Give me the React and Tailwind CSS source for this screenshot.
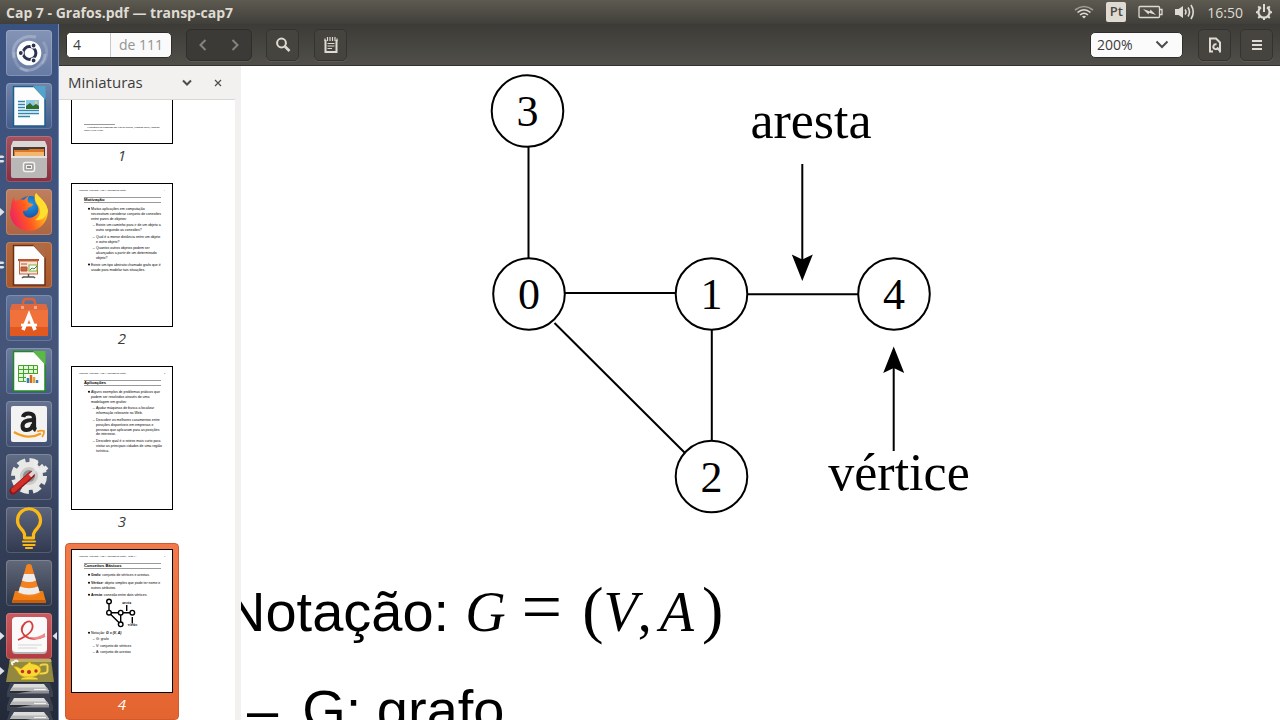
import React from "react";

const ui = "font-['Open_Sans','Noto_Sans',sans-serif]";

/* ---------- launcher icons, drawn on a 46 unit tile ---------- */

const Dash = () => (
  <svg viewBox="0 0 46 46" className="size-full">
    <g fill="none" stroke="#fff" strokeOpacity=".24" strokeWidth="3">
      <path d="M8 28C4 14 16 4 30 7" />
      <path d="M14 38C26 44 38 36 39 24" />
      <path d="M37 12C42 18 42 28 36 34" strokeOpacity=".16" />
      <path d="M8 22C8 34 14 40 22 41" strokeOpacity=".16" />
    </g>
    <circle cx="23" cy="23" r="12.300" fill="#fff" />
    <circle cx="23.500" cy="23" r="6.400" fill="none" stroke="#2b3350" strokeWidth="3" />
    <g stroke="#fff" strokeWidth="1.200" fill="#2b3350">
      <circle cx="14.800" cy="23" r="2.500" />
      <circle cx="27.600" cy="15.500" r="2.500" />
      <circle cx="27.600" cy="30.500" r="2.500" />
    </g>
  </svg>
);

const Sheet = ({ edge, fold, children }) => (
  <svg viewBox="0 0 46 46" className="size-full">
    <path d="M7.500 3.500H28L39 15V43H7.500Z" fill="#fdfdfd" stroke={edge} strokeWidth="1.500" />
    <path d="M27 3H39.500V17Z" fill={fold} />
    <path d="M27 3H39.500V17Z" fill="#fff" fillOpacity=".12" />
    {children}
  </svg>
);

const Writer = () => (
  <Sheet edge="#1b5f8c" fold="#3c97c4">
    <path d="M12 18.500h7M12 21.500h7M12 24.500h7M12 27.500h21M12 30.500h21M12 33.500h12" stroke="#2e86b5" strokeWidth="1.400" />
    <rect x="20" y="17" width="13" height="9" fill="#8cc6ea" />
    <path d="M20 26V23l4-3 3 3 3-2 3 2v3Z" fill="#2f6b2a" />
    <circle cx="30" cy="19.500" r="1.300" fill="#f5d64a" />
  </Sheet>
);

const Impress = () => (
  <Sheet edge="#6b2f16" fold="#a3552c">
    <rect x="12" y="17" width="21" height="2" fill="#b4552d" />
    <rect x="13.500" y="19" width="18" height="13" fill="#fbe3d8" stroke="#c2653c" />
    <path d="M15 22h6M15 25h6v4h-6z" stroke="#b4552d" fill="#c2653c" />
    <rect x="23" y="23" width="8" height="6" fill="#fff" stroke="#7cb342" />
    <path d="M24 28l2-2 2 1 3-3" stroke="#388e3c" fill="none" />
    <path d="M22.500 32v3M17 35h11M17 35l-1 1M28 35l1 1" stroke="#555" strokeWidth="1.500" />
  </Sheet>
);

const Calc = () => (
  <Sheet edge="#1f8a1f" fold="#43b02a">
    <rect x="12.500" y="17.500" width="19" height="16" fill="#e4f5dc" />
    <path d="M12.500 17.500h19v16h-19zM12.500 21.500h19M12.500 25.500h19M12.500 29.500h19M17.500 17.500v16M22.500 17.500v16M27.500 17.500v16" stroke="#43a32a" fill="none" />
    <rect x="20" y="26" width="14" height="9" fill="#f7f7f7" />
    <path d="M22 35v-5M31 35v-3" stroke="#2b7fc4" strokeWidth="2.500" />
    <path d="M25 35v-8" stroke="#d2691e" strokeWidth="2.500" />
    <path d="M28 35v-6" stroke="#e8a13a" strokeWidth="2.500" />
  </Sheet>
);

const Files = () => (
  <svg viewBox="0 0 46 46" className="size-full">
    <path d="M7 5H39L41 10V20H5V10Z" fill="#d9d8d5" />
    <rect x="7" y="11" width="32" height="10" fill="#4b3a34" />
    <path d="M8 14h14l2-1h14v8H8Z" fill="#d9772b" />
    <path d="M9 16h29v4H9Z" fill="#f4b66c" />
    <path d="M5 20H41V40Q41 42 39 42H7Q5 42 5 40Z" fill="#b9b8b6" />
    <path d="M5 20H41V22H5Z" fill="#e3e2e0" />
    <rect x="17.500" y="26.500" width="11" height="9" rx="2" fill="#a3a2a0" stroke="#f2f2f2" strokeWidth="1.500" />
    <rect x="20.500" y="29.500" width="5" height="3" fill="#8a8987" stroke="#f2f2f2" />
  </svg>
);

const Firefox = () => (
  <svg viewBox="0 0 46 46" className="size-full">
    <defs>
      <linearGradient id="ffBody" x1="0" y1="0.600" x2="1" y2="0.200">
        <stop offset="0" stopColor="#f0245e" />
        <stop offset=".4" stopColor="#ff5a1f" />
        <stop offset=".8" stopColor="#ffb61e" />
        <stop offset="1" stopColor="#fff04a" />
      </linearGradient>
      <radialGradient id="ffGlobe" cx=".5" cy=".3" r=".7">
        <stop offset="0" stopColor="#1aa0ea" />
        <stop offset="1" stopColor="#1b2f8c" />
      </radialGradient>
    </defs>
    <circle cx="24" cy="21" r="14" fill="url(#ffGlobe)" />
    <path d="M5 18C5 13 7 10 8 8C8 11 9 12 10 12C12 11 15 10 18 11C21 8 22 7 23 7C21 10 21 12 23 14L27 15C27 17 24 18 22 19C22 22 19 22 17 22C17 27 22 30 27 28C32 26 34 21 31 16C28 12 28 7 30 4C32 7 35 9 38 13C42 18 43 25 40 31C36 39 29 42 22 42C12 41 5 34 4 25Z" fill="url(#ffBody)" />
    <path d="M30 4C28 9 29 12 32 16C36 22 34 28 29 31C36 32 40 28 42 22C41 14 35 10 30 4Z" fill="#ffdf2e" />
  </svg>
);

const Software = () => (
  <svg viewBox="0 0 46 46" className="size-full">
    <path d="M17 13V8Q17 4 21 4h4Q29 4 29 8v5" fill="none" stroke="#d9623c" strokeWidth="2.500" />
    <path d="M6 9H40L42 15V41H4V15Z" fill="#f0713a" />
    <path d="M6 9H40L42 15H4Z" fill="#e0683f" />
    <path d="M4 32H42V41H4Z" fill="#e2581f" />
    <path d="M15 11h3v3h-3zM28 11h3v3h-3z" fill="#f6a98a" />
    <path d="M17 35L23 20L29 35" fill="none" stroke="#fff" strokeWidth="3.600" />
    <path d="M15 30H31" stroke="#fff" strokeWidth="2.600" />
  </svg>
);

const Amazon = () => (
  <svg viewBox="0 0 46 46" className="size-full">
    <rect x="5" y="5" width="36" height="36" rx="2" fill="#f3f3f3" />
    <g fill="none" stroke="#1f1f1f">
      <path d="M17 16Q18 12.500 22.500 12.500Q28 12.500 28 17V25Q28 28 30 29" strokeWidth="4.200" />
      <path d="M27 19Q16.500 19 16.500 25Q16.500 29 20.500 29Q26 29 27 23" strokeWidth="4" />
    </g>
    <path d="M8 31Q22 39.500 35 32.500" stroke="#f59a1b" strokeWidth="2.200" fill="none" />
    <path d="M31 30.500Q35 29 38 30Q38.500 33 36 36" stroke="#f59a1b" strokeWidth="1.800" fill="none" />
  </svg>
);

const Settings = () => (
  <svg viewBox="0 0 46 46" className="size-full">
    <circle cx="23" cy="22" r="15" fill="none" stroke="#e8e8e6" strokeWidth="6" strokeDasharray="7.850 3.930" />
    <circle cx="23" cy="22" r="11.500" fill="#c9c9c7" stroke="#e8e8e6" strokeWidth="5" />
    <circle cx="23" cy="22" r="6" fill="#8b8f97" />
    <path d="M7 37L25 21" stroke="#8e1512" strokeWidth="7" strokeLinecap="round" />
    <path d="M7.500 36L25 20.500" stroke="#d3302c" strokeWidth="5" strokeLinecap="round" />
    <path d="M24 22L33 13" stroke="#d8d8d8" strokeWidth="3.500" />
    <path d="M31 7Q28 11 31 15Q36 18 41 13" fill="none" stroke="#ececec" strokeWidth="4" />
  </svg>
);

const Bulb = () => (
  <svg viewBox="0 0 46 46" className="size-full">
    <path d="M18.500 31V27Q17.500 24 14.500 21A11.500 11.500 0 1 1 31.500 21Q28.500 24 27.500 27V31Z" fill="none" stroke="#fbb917" strokeWidth="3.200" strokeLinejoin="round" />
    <path d="M17 34.500H29M17.500 38H28.500M20 41H26" stroke="#fbb917" strokeWidth="2.200" strokeLinecap="round" />
  </svg>
);

const Cone = () => (
  <svg viewBox="0 0 46 46" className="size-full">
    <path d="M9 31H37L40 42H6Z" fill="#ef7d16" />
    <path d="M6 40H40V43H6Z" fill="#c95f0b" />
    <path d="M20.500 5Q23 3 25.500 5L34 34Q23 40 12 34Z" fill="#f58220" />
    <path d="M18 14H28L30 20.500Q23 23.500 16 20.500Z" fill="#ededed" />
    <path d="M14 26.500Q23 30 32 26.500L33.700 32.500Q23 37 12.300 32.500Z" fill="#ededed" />
  </svg>
);

const Reader = () => (
  <svg viewBox="0 0 46 46" className="size-full">
    <rect x="6" y="5" width="35" height="36" rx="4" fill="#b9b4b4" />
    <rect x="6" y="4" width="35" height="35" rx="4" fill="#fafafa" />
    <path d="M12 27Q28 20 26.500 12Q25 6 19 10Q13 16 18 22Q26 29 39 23" fill="none" stroke="#d93a3a" strokeWidth="1.800" />
    <path d="M20 23Q29 27 39 20V24Q28 29 20 23Z" fill="#ef8a8a" />
    <path d="M12 32H36M12 35H31" stroke="#d4d4d4" strokeWidth="1.200" />
  </svg>
);

const Teapot = () => (
  <svg viewBox="0 0 48 24" className="h-6 w-12">
    <path d="M4 0H45L48 23H0Z" fill="#93883f" />
    <path d="M4 0H45L45.500 3H3.500Z" fill="#b9ae62" />
    <path d="M34 7Q35 5 38 5.500H40Q42 5.500 41.500 9V12Q41 14.500 36 14.500H33" fill="none" stroke="#f0d648" strokeWidth="2" />
    <path d="M7 7L12 8Q15 11 17 8Q20 5 22 4.500L23.500 2L25 4.500Q31 5 34 8Q36 11 34 14Q31 17.500 27 18H18Q13 17 11 12Z" fill="#f7d934" stroke="#b38f0c" strokeWidth=".6" />
    <path d="M16 19Q23 17 31 19L32 20.500H15Z" fill="#f7d934" />
    <circle cx="16.500" cy="12.500" r="1.700" fill="#c9252d" />
    <circle cx="23" cy="13" r="2" fill="#c9252d" />
    <circle cx="30" cy="12" r="1.700" fill="#c9252d" />
    <path d="M7 6Q4 3 8 3Q10 0 12 3" stroke="#f4f4f4" strokeWidth="2" fill="none" />
  </svg>
);

const Drive = () => (
  <svg viewBox="0 0 48 14" className="h-[14px] w-12 shrink-0">
    <path d="M4 0H44L47 9V14H1V9Z" fill="#3b414e" />
    <path d="M8 1H38L43 8H4Z" fill="#dcdcda" />
    <path d="M6 4.500H41L43 8H4Z" fill="#b4b5b5" />
    <path d="M4 8H43V10.500H4Z" fill="#8b8d90" />
    <path d="M4 8H26L10 10.500H4Z" fill="#2a2d33" />
    <path d="M28 6.500H40" stroke="#f0f0f0" strokeWidth="1.200" />
  </svg>
);

const apps = [
  { name: "Dash", icon: Dash, tile: "from-[#8494b5] to-[#667aa3]" },
  { name: "LibreOffice Writer", icon: Writer, tile: "from-[#7286ac] to-[#435c8b]" },
  { name: "Arquivos", icon: Files, tile: "from-[#a3525f] to-[#853042]", mark: "two" },
  { name: "Firefox", icon: Firefox, tile: "from-[#bf7f5e] to-[#ad6543]", mark: "one" },
  { name: "LibreOffice Impress", icon: Impress, tile: "from-[#b46a3d] to-[#a9572a]", mark: "two" },
  { name: "Programas", icon: Software, tile: "from-[#63759a] to-[#465a83]" },
  { name: "LibreOffice Calc", icon: Calc, tile: "from-[#6c7c9e] to-[#465a83]" },
  { name: "Amazon", icon: Amazon, tile: "from-[#66738f] to-[#414f71]" },
  { name: "Configurações", icon: Settings, tile: "from-[#626d86] to-[#3d4762]" },
  { name: "Dicas", icon: Bulb, tile: "from-[#5d667c] to-[#30394f]" },
  { name: "VLC", icon: Cone, tile: "from-[#626979] to-[#2f374a]" },
  { name: "Visualizador de documentos", icon: Reader, tile: "from-[#c95b60] to-[#b23c41]", mark: "one", active: true },
];

const Mark = ({ kind }) => (
  <svg viewBox="0 0 6 12" className="h-3 w-[6px] shrink-0" fill="#dfe1e6">
    {kind === "one" && <path d="M0 2L4.500 6L0 10Z" />}
    {kind === "two" && <path d="M0 2.500H3L4.500 4L3 5H0ZM0 7H3L4.500 8L3 9.500H0Z" />}
    {kind === "here" && <path d="M5 2L.5 6L5 10Z" />}
  </svg>
);

const Launcher = () => (
  <nav aria-label="Lançador" className="flex w-[59px] shrink-0 flex-col overflow-hidden border-r border-[#6f8fc6] bg-linear-to-b from-[#3a5280] via-[#455578] to-[#222938] pt-[6px]">
    <ul className="flex shrink-0 flex-col gap-[7px]">
      {apps.map(({ name, icon: Icon, tile, mark, active }) => (
        <li key={name} className="flex items-center">
          <Mark kind={mark} />
          <button aria-label={name} className={"size-[46px] shrink-0 rounded-[4px] bg-linear-to-b shadow-[inset_0_0_0_1px_rgba(255,255,255,0.18)] " + tile}>
            <Icon />
          </button>
          <Mark kind={active ? "here" : ""} />
        </li>
      ))}
    </ul>
    <div className="flex shrink-0 items-center">
      <Mark kind="one" />
      <button aria-label="Chaleira" className="shrink-0"><Teapot /></button>
    </div>
    <div className="flex flex-col pl-[6px]">
      <Drive />
      <Drive />
      <Drive />
    </div>
  </nav>
);

/* ---------- top panel and toolbar ---------- */

const TopBar = () => (
  <header className={ui + " flex h-6 shrink-0 items-center justify-between bg-linear-to-b from-[#5d5a50] to-[#403f3a] pl-[6px] pr-[7px] text-[#dfdbd2]"}>
    <h1 className="text-[14px] font-bold">Cap 7 - Grafos.pdf — transp-cap7</h1>
    <div className="flex items-center">
      <svg viewBox="0 0 20 14" className="mr-3 h-[14px] w-5" fill="none" stroke="#dfdbd2" strokeWidth="1.600">
        <path d="M1 5Q10-2 19 5" strokeOpacity=".55" />
        <path d="M3.500 7.500Q10 2 16.500 7.500" />
        <path d="M6 10Q10 6.500 14 10" />
        <path d="M8 11.500L10 13.500L12 11.500Q10 10 8 11.500Z" fill="#dfdbd2" stroke="none" />
      </svg>
      <span className="mr-3 flex h-5 w-5 items-center justify-center rounded-[2px] bg-[#dfdbd2] text-[13px] font-semibold text-[#4a4843]">Pt</span>
      <svg viewBox="0 0 25 14" className="mr-3 h-[14px] w-[25px]" fill="none" stroke="#dfdbd2">
        <rect x="1" y="1.500" width="20.500" height="11" rx="1" strokeWidth="1.300" />
        <path d="M22 4.500H24V9.500H22" strokeWidth="1.300" />
        <path d="M5 4L12 6.500L12.500 4.500L18 10L11 7.800L10.500 9.500Z" fill="#dfdbd2" stroke="none" />
      </svg>
      <svg viewBox="0 0 20 16" className="mr-3 h-4 w-5" fill="none" stroke="#dfdbd2" strokeWidth="1.600">
        <path d="M0 5H3.500L8 2V14L3.500 11H0Z" fill="#dfdbd2" stroke="none" />
        <path d="M10 5.500Q12 8 10 10.500M13 3.500Q16 8 13 12.500M16 1Q20.500 8 16 15" />
      </svg>
      <time className="mr-3 text-[14px]">16:50</time>
      <svg viewBox="0 0 18 18" className="h-[18px] w-[18px]" fill="none" stroke="#dfdbd2">
        <path d="M6 4.300A5.600 5.600 0 1 0 12 4.300" strokeWidth="2.200" />
        <path d="M9 1V9" strokeWidth="2" />
        <path d="M1 9.200H3.500M14.500 9.200H17M3.200 3.400L5 5.200M14.800 3.400L13 5.200M3.200 15L5 13.200M14.800 15L13 13.200M9 14.500V17" strokeWidth="2" />
      </svg>
    </div>
  </header>
);

const toolButton = "flex h-8 w-[33px] items-center justify-center rounded-[5px] border border-[#34332f] bg-[#45443e] text-[#dfdbd2] shadow-[0_1px_0_#5d5b53]";

const Toolbar = () => (
  <div role="toolbar" className={ui + " flex h-[42px] shrink-0 items-center border-b border-[#34332f] bg-linear-to-b from-[#3c3b37] to-[#514f48] px-[7px] text-[14px]"}>
    <div className="mr-[14px] flex h-[26px] w-[106px] items-center overflow-hidden rounded-[5px] border border-[#2f2e2b] bg-[#fafafa]">
      <input aria-label="Página" defaultValue="4" className="h-full w-11 border-r border-[#c8c8c8] bg-white pl-[6px] text-[#3c3c3c] outline-none" />
      <span className="flex-1 text-center text-[#949494]">de 111</span>
    </div>
    <div className="mr-[14px] flex h-8 w-[66px] rounded-[5px] border border-[#2f2e2b] bg-[#3b3a36] shadow-[0_1px_0_#5d5b53]">
      <button aria-label="Página anterior" className="flex flex-1 items-center justify-center">
        <svg viewBox="0 0 10 12" className="h-3 w-[10px]" fill="none" stroke="#85837b" strokeWidth="2"><path d="M7.500 1L2.500 6L7.500 11" /></svg>
      </button>
      <button aria-label="Próxima página" className="flex flex-1 items-center justify-center">
        <svg viewBox="0 0 10 12" className="h-3 w-[10px]" fill="none" stroke="#85837b" strokeWidth="2"><path d="M2.500 1L7.500 6L2.500 11" /></svg>
      </button>
    </div>
    <button aria-label="Localizar" className={toolButton + " mr-[15px]"}>
      <svg viewBox="0 0 16 16" className="size-4" fill="none" stroke="#dfdbd2"><circle cx="6.500" cy="6" r="4.400" strokeWidth="2" /><path d="M10 9.500L14.500 14" strokeWidth="2.600" /></svg>
    </button>
    <button aria-label="Anotações" className={toolButton}>
      <svg viewBox="0 0 14 16" className="h-4 w-[14px]" fill="none" stroke="#dfdbd2">
        <path d="M1.500 3V15H12.500V3" strokeWidth="2" />
        <path d="M1 1.500V4M3.500 0V4M6 0V4M8.500 0V4M11 0V4M13 1.500V4" strokeWidth="1.200" />
        <path d="M3.500 6.500H10.500M3.500 9H10.500M3.500 11.500H8" strokeWidth="1.200" />
      </svg>
    </button>
    <div className="relative ml-auto mr-[15px] h-[26px] w-[93px]">
      <select aria-label="Zoom" className="h-full w-full appearance-none rounded-[5px] border border-[#2f2e2b] bg-[#fbfbfb] pl-[6px] text-[#3c3c3c] outline-none">
        <option>200%</option>
      </select>
      <svg viewBox="0 0 14 9" className="pointer-events-none absolute right-[14px] top-2 h-[9px] w-[14px]" fill="none" stroke="#4c4c4c" strokeWidth="2"><path d="M1.500 1.500L7 7L12.500 1.500" /></svg>
    </div>
    <button aria-label="Propriedades" className={toolButton + " mr-[9px]"}>
      <svg viewBox="0 0 14 16" className="h-4 w-[14px]" fill="none" stroke="#dfdbd2" strokeWidth="2">
        <path d="M5 14.500H2V1.500H8L12 5.500V14.500H11" />
        <path d="M8.500 7.500A2.400 2.400 0 1 0 9.800 11M9 10.500L12.500 14.500" />
      </svg>
    </button>
    <button aria-label="Menu" className={toolButton}>
      <svg viewBox="0 0 12 12" className="size-3" stroke="#dfdbd2" strokeWidth="2"><path d="M1 2H11M1 6H11M1 10H11" /></svg>
    </button>
  </div>
);

/* ---------- page miniatures, one unit is a tenth of a pixel ---------- */

const B = 190;
const D = 240;

const Lines = ({ lines }) =>
  lines.map(([x, y, text, mark, bold]) => (
    <g key={y}>
      {mark && x === B && <circle cx="170" cy={y - 12} r="10" />}
      {mark && x === D && <text x="208" y={y}>–</text>}
      <text x={x} y={y}>{bold && <tspan fontWeight="bold">{bold}</tspan>}{text}</text>
    </g>
  ));

const MiniPage = ({ title, number, running, lines, children }) => (
  <svg viewBox="0 0 1000 1420" className="block h-[142px] w-[100px] font-['Liberation_Sans',Arial,sans-serif]" fontSize="35" fill="#000">
    <g fontSize="22" fontStyle="italic" fontFamily="Liberation Serif, serif">
      <text x="70" y="70">{running}</text>
      <text x="920" y="70">{number}</text>
    </g>
    <path d="M120 135H890M120 185H890" stroke="#555" strokeWidth="6" />
    <text x="120" y="172" fontSize="42" fontWeight="bold">{title}</text>
    <Lines lines={lines} />
    {children}
  </svg>
);

const head = "Projeto de Algoritmos – Cap.7 Algoritmos em Grafos";

const page2 = [
  [B, 260, "Muitas aplicações em computação", true],
  [B, 310, "necessitam considerar conjunto de conexões"],
  [B, 360, "entre pares de objetos:"],
  [D, 420, "Existe um caminho para ir de um objeto a", true],
  [D, 470, "outro seguindo as conexões?"],
  [D, 537, "Qual é a menor distância entre um objeto", true],
  [D, 587, "e outro objeto?"],
  [D, 650, "Quantos outros objetos podem ser", true],
  [D, 700, "alcançados a partir de um determinado"],
  [D, 750, "objeto?"],
  [B, 817, "Existe um tipo abstrato chamado grafo que é", true],
  [B, 867, "usado para modelar tais situações."],
];

const page3 = [
  [B, 260, "Alguns exemplos de problemas práticos que", true],
  [B, 310, "podem ser resolvidos através de uma"],
  [B, 357, "modelagem em grafos:"],
  [D, 420, "Ajudar máquinas de busca a localizar", true],
  [D, 470, "informação relevante na Web."],
  [D, 540, "Descobrir os melhores casamentos entre", true],
  [D, 590, "posições disponíveis em empresas e"],
  [D, 637, "pessoas que aplicaram para as posições"],
  [D, 683, "de interesse."],
  [D, 750, "Descobrir qual é o roteiro mais curto para", true],
  [D, 800, "visitar as principais cidades de uma região"],
  [D, 850, "turística."],
];

const page4 = [
  [B, 260, ": conjunto de vértices e arestas.", true, "Grafo"],
  [B, 340, ": objeto simples que pode ter nome e", true, "Vértice"],
  [B, 390, "outros atributos."],
  [B, 460, ": conexão entre dois vértices.", true, "Aresta"],
  [D, 900, "G: grafo", true],
  [D, 967, "V: conjunto de vértices", true],
  [D, 1030, "A: conjunto de arestas", true],
];

const FirstPage = () => (
  <svg viewBox="0 0 1000 1420" className="block h-[142px] w-[100px]" fontSize="23" fontStyle="italic" fontFamily="Liberation Serif, serif" fill="#000">
    <path d="M120 1235H430" stroke="#555" strokeWidth="6" />
    <text x="150" y="1265">*Transparências elaboradas por Charles Ornelas, Leonardo Rocha, Leonardo</text>
    <text x="120" y="1298">Mata e Nivio Ziviani</text>
  </svg>
);

const MiniGraph = () => (
  <g>
    <circle cx="170" cy="828" r="10" />
    <text x="190" y="840">
      Notação: <tspan fontWeight="bold" fontStyle="italic">G = (V, A)</tspan>
    </text>
    <g fill="#fff" stroke="#000" strokeWidth="14">
      <path d="M370 515V627H600M370 627L487 743V627M547 550V610M603 735V670" fill="none" />
      {[[370, 515], [370, 627], [487, 627], [603, 627], [487, 743]].map(([x, y]) => (
        <circle key={x + "-" + y} cx={x} cy={y} r="23" />
      ))}
    </g>
    <g fontSize="34" fontWeight="bold" textAnchor="middle" fontFamily="Liberation Serif, serif">
      <text x="547" y="535">aresta</text>
      <text x="607" y="757">vértice</text>
    </g>
  </g>
);

const Thumb = ({ n, selected, children }) => (
  <li className={"flex h-[177px] w-[114px] shrink-0 flex-col items-center rounded-[4px] border pt-[5px] " + (selected ? "border-[#cf5c30] bg-linear-to-b from-[#f27a4a] to-[#e4642f] text-white" : "border-transparent text-[#3c3c3c]")}>
    <a href={"#pagina-" + n} className="flex flex-col items-center">
      <span className="block border border-black bg-white">{children}</span>
      <span className="text-[15px] leading-[22px] italic">{n}</span>
    </a>
  </li>
);

const Sidebar = () => (
  <aside className={ui + " flex w-[182px] shrink-0 flex-col bg-[#f2f1f0] pr-[6px]"}>
    <div className="flex h-[34px] shrink-0 items-center border-b border-[#d9d7d5] pl-[9px] text-[#3c3c3c]">
      <h2 className="flex-1 text-[15px]">Miniaturas</h2>
      <button aria-label="Escolher painel" className="mr-[22px]">
        <svg viewBox="0 0 10 8" className="h-2 w-[10px]" fill="none" stroke="#4c4c4c" strokeWidth="2"><path d="M1 1.500L5 5.500L9 1.500" /></svg>
      </button>
      <button aria-label="Fechar painel" className="mr-[13px]">
        <svg viewBox="0 0 8 8" className="size-2" stroke="#4c4c4c" strokeWidth="1.200"><path d="M1 1L7 7M7 1L1 7" /></svg>
      </button>
    </div>
    <div className="min-h-0 flex-1 overflow-hidden bg-white pl-[6px]">
      <ul className="-mt-[106px] flex flex-col gap-[6px]">
        <Thumb n={1}><FirstPage /></Thumb>
        <Thumb n={2}><MiniPage title="Motivação" number="1" running={head} lines={page2} /></Thumb>
        <Thumb n={3}><MiniPage title="Aplicações" number="2" running={head} lines={page3} /></Thumb>
        <Thumb n={4} selected>
          <MiniPage title="Conceitos Básicos" number="3" running={head + " – Seção 7.1"} lines={page4}>
            <MiniGraph />
          </MiniPage>
        </Thumb>
      </ul>
    </div>
  </aside>
);

/* ---------- document ---------- */

const nodes = [
  ["3", 286.5, 45],
  ["0", 288, 228],
  ["1", 470.5, 228],
  ["4", 653, 228],
  ["2", 470.5, 410.5],
];

const Graph = () => (
  <svg viewBox="0 0 760 497" className="block h-[497px] w-[760px] shrink-0" fontFamily="Liberation Serif, Times New Roman, serif" textAnchor="middle">
    <g stroke="#000" strokeWidth="2" fill="none">
      <path d="M287.500 81V193M324 227H435M506 228.300H617M470.800 264V375M313.500 257L443.500 386.500M561.300 98V194M652.700 385V302" />
      {nodes.map(([n, x, y]) => <circle key={n} cx={x} cy={y} r="35.800" />)}
    </g>
    <path d="M561.300 215L550.800 188.500L561.300 193.500L571.800 188.500Z" />
    <path d="M652.700 280.500L642.200 307L652.700 302L663.200 307Z" />
    <g fontSize="44">
      {nodes.map(([n, x, y]) => <text key={n} x={x} y={y + 15}>{n}</text>)}
    </g>
    <g fontSize="52">
      <text x="570" y="72">aresta</text>
      <text x="658" y="424">vértice</text>
    </g>
  </svg>
);

const Document = () => (
  <main className="min-w-0 flex-1 overflow-hidden bg-white font-['Liberation_Sans',Arial,sans-serif] text-[56px] leading-[97px] text-black">
    <Graph />
    <p className="-ml-4 flex items-baseline whitespace-nowrap">
      <span className="mr-4">Notação:</span>
      <span className="flex items-baseline font-['Liberation_Serif','Times_New_Roman',serif]">
        <i className="mr-4">G</i>
        <span className="mr-5 text-[72px] leading-none">=</span>
        <span className="text-[64px] leading-none">(</span>
        <i>V</i>
        <span className="mr-2">,</span>
        <i className="mr-2">A</i>
        <span className="text-[64px] leading-none">)</span>
      </span>
    </p>
    <p className="flex whitespace-nowrap pl-[6px]">
      <span className="mr-6">–</span>
      <span>G: grafo</span>
    </p>
  </main>
);

export default function App() {
  return (
    <div className="flex h-screen flex-col overflow-hidden bg-white">
      <TopBar />
      <div className="flex min-h-0 flex-1">
        <Launcher />
        <div className="flex min-w-0 flex-1 flex-col">
          <Toolbar />
          <div className="flex min-h-0 flex-1">
            <Sidebar />
            <Document />
          </div>
        </div>
      </div>
    </div>
  );
}
